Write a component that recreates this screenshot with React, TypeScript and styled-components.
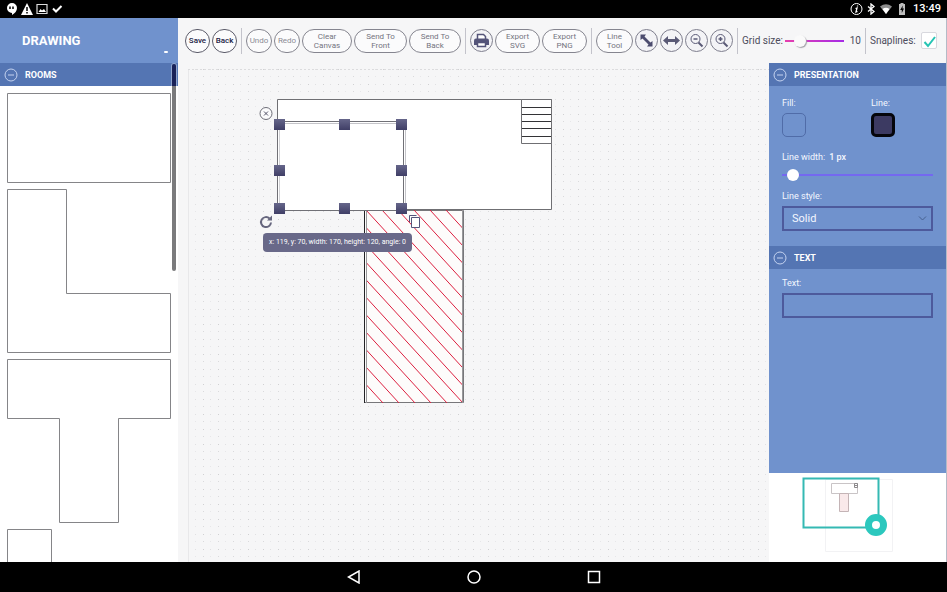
import React, { useState } from "react";
import styled, { createGlobalStyle, css } from "styled-components";

const GlobalStyle = createGlobalStyle`
  *, *::before, *::after { box-sizing: border-box; }
  html, body { margin: 0; height: 100%; overflow: hidden; }
  body { font-family: Roboto, "Liberation Sans", sans-serif; font-size: 9px; line-height: 12px; color: #4a4a68; }
  button, input, select, output { font: inherit; color: inherit; margin: 0; }
  button { cursor: pointer; }
  svg { display: block; }
`;

const Screen = styled.div`
  display: flex;
  flex-direction: column;
  height: 100vh;
  background: #f6f6f7;
`;

/* System bars */

const StatusBar = styled.header`
  display: flex;
  align-items: center;
  flex: none;
  height: 18px;
  padding: 0 6px;
  background: #000;
  color: #fff;
`;

const StatusGroup = styled.div<{ $end?: boolean }>`
  display: flex;
  align-items: center;
  gap: 3px;
  margin-left: ${(p) => (p.$end ? "auto" : 0)};
`;

const Clock = styled.time`
  margin-left: 2px;
  font-size: 11px;
  line-height: 18px;
  font-weight: 500;
`;

const NavBar = styled.nav`
  display: flex;
  justify-content: center;
  flex: none;
  height: 30px;
  background: #000;
`;

const NavButton = styled.button`
  display: grid;
  place-items: center;
  width: 120px;
  padding: 0;
  border: 0;
  background: none;
`;

/* Editor frame */

const Editor = styled.div`
  display: flex;
  flex: 1;
  min-height: 0;
  border-right: 1px solid #b4bac6;
`;

const Library = styled.aside`
  position: relative;
  display: flex;
  flex-direction: column;
  flex: none;
  width: 178px;
  background: #fff;
`;

const Brand = styled.div`
  position: relative;
  flex: none;
  height: 45px;
  padding: 0 22px;
  background: #7092cd;
`;

const Title = styled.h1`
  margin: 0;
  font-size: 13px;
  line-height: 45px;
  font-weight: 700;
  color: #fff;
`;

const BrandMark = styled.span`
  position: absolute;
  right: 10px;
  bottom: 10px;
  width: 4px;
  height: 2px;
  border-radius: 1px;
  background: #fff;
`;

const SectionHeader = styled.button`
  display: flex;
  align-items: center;
  gap: 7px;
  flex: none;
  width: 100%;
  height: 23px;
  padding: 0 4px;
  border: 0;
  background: #5475b3;
  color: #fff;
  font-size: 9px;
  font-weight: 700;
  text-align: left;
`;

const ShapeList = styled.div`
  display: flex;
  flex-direction: column;
  gap: 6px;
  flex: 1;
  min-height: 0;
  padding: 7px;
  overflow: hidden;
`;

const ShapeButton = styled.button`
  flex: none;
  padding: 0;
  border: 0;
  background: none;
`;

const ScrollThumb = styled.div`
  position: absolute;
  top: 46px;
  right: 2px;
  width: 4px;
  height: 207px;
  border-radius: 2px;
  background: linear-gradient(#1a2258 22px, #7a7a7c 22px);
  box-shadow: 0 0 0 1px rgba(255, 255, 255, 0.35);
`;

const Workspace = styled.div`
  display: flex;
  flex-direction: column;
  flex: 1;
  min-width: 0;
`;

const Stage = styled.div`
  display: flex;
  flex: 1;
  min-height: 0;
`;

/* Toolbar */

const Toolbar = styled.div`
  display: flex;
  align-items: center;
  gap: 2px;
  flex: none;
  height: 45px;
  padding: 0 7px;
  white-space: nowrap;
`;

const ToolButton = styled.button<{ $width: number; $tone?: "strong" | "muted" }>`
  flex: none;
  width: ${(p) => p.$width}px;
  height: 24px;
  padding: 0;
  border: 1px solid #85858f;
  border-radius: 12px;
  background: #fbfbfc;
  font-size: 8px;
  line-height: 9px;
  white-space: normal;
  color: #74747f;
  ${(p) => p.$tone === "strong" && css`color: #222244; border-color: #5c5c6a; font-weight: 500;`}
  ${(p) => p.$tone === "muted" && css`color: #8b8b95;`}
`;

const IconButton = styled.button`
  display: grid;
  place-items: center;
  flex: none;
  width: 23px;
  height: 23px;
  padding: 0;
  border: 1px solid #7f7f8e;
  border-radius: 50%;
  background: #f3f3f6;
`;

const Divider = styled.span`
  flex: none;
  width: 1px;
  height: 26px;
  margin: 0 2px;
  background: #c3c3cb;
`;

const ToolLabel = styled.label`
  font-size: 10px;
  line-height: 14px;
  color: #4c4c5c;
`;

const GridRange = styled.input`
  appearance: none;
  flex: none;
  width: 59px;
  height: 16px;
  background: linear-gradient(90deg, #e63fae, #a62be6) center / 100% 2px no-repeat;
  &::-webkit-slider-thumb {
    appearance: none;
    width: 12px;
    height: 12px;
    border-radius: 50%;
    background: #fafafa;
    box-shadow: 1px 1px 1px #a4a4aa;
  }
`;

const GridValue = styled.output`
  width: 15px;
  font-size: 10px;
  line-height: 14px;
  text-align: right;
  color: #4c4c5c;
`;

const SnapCheck = styled.input`
  appearance: none;
  flex: none;
  width: 16px;
  height: 17px;
  border: 1px solid #d8d8de;
  border-radius: 2px;
  background: #fff;
`;

const SnapBox = styled.span`
  position: relative;
  display: flex;
  margin-left: 3px;
  svg { position: absolute; left: 2px; top: 3px; pointer-events: none; }
`;

/* Canvas */

const Canvas = styled.main`
  position: relative;
  flex: 1;
  min-width: 0;
  overflow: hidden;
`;

const Drawing = styled.svg`
  width: 100%;
  height: 100%;
`;

const Measure = styled.div`
  position: absolute;
  left: 85px;
  top: 170px;
  padding: 0 6px;
  border-radius: 4px;
  background: #696989;
  color: #fff;
  font-size: 7px;
  line-height: 19px;
  white-space: nowrap;
`;

/* Inspector */

const Side = styled.aside`
  display: flex;
  flex-direction: column;
  flex: none;
  width: 177px;
  background: #fff;
`;

const Inspector = styled.form`
  display: flex;
  flex-direction: column;
  flex: 1;
  min-height: 0;
  background: #7092cd;
  color: #f4f7ff;
`;

const Fields = styled.div<{ $compact?: boolean }>`
  display: flex;
  flex-direction: column;
  padding: ${(p) => (p.$compact ? 5 : 8)}px 13px 15px;
`;

const SwatchRow = styled.div`
  display: grid;
  grid-template-columns: 89px 1fr;
  margin-bottom: 11px;
`;

const FieldLabel = styled.label`
  display: block;
  font-size: 9px;
  line-height: 19px;
`;

const WidthValue = styled.output`
  margin-left: 4px;
  font-weight: 500;
`;

const Swatch = styled.button<{ $filled?: boolean }>`
  display: block;
  width: 24px;
  height: 24px;
  padding: 0;
  border: ${(p) => (p.$filled ? "3px solid #05060c" : "1px solid #506ca8")};
  border-radius: 5px;
  background: ${(p) => (p.$filled ? "#3c3a62" : "transparent")};
`;

const WidthRange = styled.input`
  appearance: none;
  width: 100%;
  height: 16px;
  margin-bottom: 4px;
  background: linear-gradient(#7468f0, #7468f0) center / 100% 2px no-repeat;
  &::-webkit-slider-thumb {
    appearance: none;
    width: 12px;
    height: 12px;
    border-radius: 50%;
    background: #fff;
  }
`;

const SelectBox = styled.div`
  position: relative;
  svg { position: absolute; right: 6px; top: 9px; pointer-events: none; }
`;

const fieldFrame = css`
  display: block;
  width: 100%;
  height: 25px;
  border: 2px solid #4d5a9c;
  border-radius: 0;
  background: transparent;
`;

const StyleSelect = styled.select`
  appearance: none;
  ${fieldFrame}
  padding: 0 8px;
  font-size: 11px;
`;

const TextInput = styled.input`
  ${fieldFrame}
  padding: 0 8px;
`;

const Navigator = styled.section`
  flex: none;
  height: 89px;
`;

function MinusCircle() {
  return (
    <svg width="14" height="14" viewBox="0 0 14 14" fill="none" stroke="#c5d3f0">
      <circle cx="7" cy="7" r="6" />
      <path d="M4 7h6" />
    </svg>
  );
}

const rooms = [
  { name: "Rectangular room", height: 90, path: "M.5.5h163v89H.5z" },
  { name: "L-shaped room", height: 164, path: "M.5.5h59v104h104v59H.5z" },
  { name: "T-shaped room", height: 164, path: "M.5.5h163v59h-52v104h-59v-104H.5z" },
  { name: "Small room", height: 90, path: "M.5.5h44v44H.5z" },
];

const handles = [
  [279, 124], [344, 124], [401, 124],
  [279, 170], [401, 170],
  [279, 208], [344, 208], [401, 208],
];

function FloorPlan() {
  return (
    <Drawing role="img" aria-label="Floor plan">
      <defs>
        <pattern id="dots" width="15" height="15" patternUnits="userSpaceOnUse">
          <rect x="0" y="0" width="1" height="1" fill="#d0d0d2" />
          <rect x="7" y="0" width="1" height="1" fill="#e0e0e2" />
          <rect x="0" y="7" width="1" height="1" fill="#dadadc" />
          <rect x="7" y="7" width="1" height="1" fill="#e7e7e9" />
        </pattern>
        <linearGradient id="grip" x2="0" y2="1">
          <stop stopColor="#66668a" />
          <stop offset="1" stopColor="#3f3e66" />
        </linearGradient>
        <clipPath id="hall"><rect x="366" y="210" width="97" height="193" /></clipPath>
      </defs>
      <svg x="10" y="6" width="100%" height="100%">
        <rect width="100%" height="100%" fill="url(#dots)" />
        <path d="M.5 0v600" stroke="#e8e8ea" />
        <path d="M0 .5h1200" stroke="#dcdcde" strokeDasharray="2 2" />
      </svg>
      <g transform="translate(-178 -63)" fill="none">
        <path d="M277.500 99.500h274v110h-274z" fill="#fff" stroke="#6f6f73" />
        <path d="M521.500 99.500h30v44h-30z" fill="#fff" stroke="#6f6f73" />
        <path d="M522 107.500h29M522 114.500h29M522 121.500h29M522 128.500h29M522 136.500h29" stroke="#333336" />
        <path d="M364.500 210.500h99v192h-99z" fill="#fdfcfb" stroke="#77777a" />
        <g clipPath="url(#hall)" stroke="#dc2040">
          {Array.from({ length: 19 }, (_, i) => 366 + (i - 12) * 16).map((x) => (
            <path key={x} d={`M${x} 210l177 193`} />
          ))}
        </g>
        <path d="M364.500 210v193" stroke="#222225" />
        <path d="M366.500 210v193M462.500 210v193" stroke="#98989b" />
        <path d="M277.500 121.500h126v89h-126z" fill="#fff" stroke="#707076" />
        <path d="M279.500 123.500v86" stroke="#d2d2d6" />
        <path d="M280 123.500h121M405.500 122v88" stroke="#c4c4c9" />
        {handles.map(([x, y]) => (
          <rect key={`${x}-${y}`} x={x - 5} y={y - 5} width="11" height="11" fill="url(#grip)" />
        ))}
        <circle cx="266" cy="113.500" r="6" fill="#fbfbfc" stroke="#6e6e78" />
        <path d="M264 111.500l4 4m0-4l-4 4" stroke="#55556a" />
        <path d="M269.500 218.500a5 5 0 1 0 1.500 4" stroke="#66667e" strokeWidth="2" />
        <path d="M267 220.500h5v-5z" fill="#66667e" />
        <path d="M409.500 222v-6.500h7" stroke="#55557c" />
        <path d="M411.500 217.500h8v10h-8z" fill="#fff" stroke="#55557c" />
      </g>
    </Drawing>
  );
}

export default function App() {
  const [gridSize, setGridSize] = useState(10);
  const [lineWidth, setLineWidth] = useState(1);

  return (
    <Screen>
      <GlobalStyle />
      <StatusBar>
        <StatusGroup>
          <svg width="12" height="12" viewBox="0 0 12 12">
            <path d="M6 0a5 5 0 0 1 5 5c0 3-2 5-5 7v-2a5 5 0 0 1 0-10z" fill="#fff" />
            <path d="M4 3.500v2.500M7 3.500v2.500" stroke="#000" strokeWidth="1.500" />
          </svg>
          <svg width="12" height="12" viewBox="0 0 12 12">
            <path d="M6 0l6 12H0z" fill="#fff" />
            <path d="M6 4v4M6 9v1.500" stroke="#000" strokeWidth="1.500" />
          </svg>
          <svg width="12" height="12" viewBox="0 0 12 12">
            <path d="M1 1.500h10v9H1z" fill="none" stroke="#ddd" strokeWidth="1.200" />
            <path d="M2.500 9l2-3 1.500 1.500L8 6l2 3z" fill="#fff" />
          </svg>
          <svg width="12" height="12" viewBox="0 0 12 12">
            <path d="M2 5.500l3 3L10.500 3" fill="none" stroke="#fff" strokeWidth="2" />
          </svg>
        </StatusGroup>
        <StatusGroup $end>
          <svg width="13" height="14" viewBox="0 0 13 14" fill="none" stroke="#fff">
            <circle cx="6.500" cy="7" r="5.500" />
            <path d="M7.500 3.500v1M5.500 6.500l1.500-.5-1 4 1.500-.5" strokeWidth="1.300" />
          </svg>
          <svg width="10" height="12" viewBox="0 0 10 12" fill="none" stroke="#fff" strokeWidth="1.300">
            <path d="M2 3.500l6 5L5 11V1l3 2.500-6 5" />
          </svg>
          <svg width="14" height="12" viewBox="0 0 14 12">
            <path d="M1 3.500Q7-1 13 3.500L7 11z" fill="#8d8d8d" />
            <path d="M3.500 6Q7 3.500 10.500 6L7 11z" fill="#fff" />
          </svg>
          <svg width="12" height="12" viewBox="0 0 12 12">
            <path d="M4.500 0h3v1H9v11H3V1h1.500z" fill="#bdbdbd" />
            <path d="M6.800 2.500L4.200 7h1.600v3L8 5.500H6.500z" fill="#000" />
          </svg>
          <Clock>13:49</Clock>
        </StatusGroup>
      </StatusBar>

      <Editor>
        <Library>
          <Brand>
            <Title>DRAWING</Title>
            <BrandMark />
          </Brand>
          <SectionHeader type="button"><MinusCircle />ROOMS</SectionHeader>
          <ShapeList>
            {rooms.map((room) => (
              <ShapeButton key={room.name} type="button" aria-label={room.name}>
                <svg width="164" height={room.height} fill="none" stroke="#858588">
                  <path d={room.path} />
                </svg>
              </ShapeButton>
            ))}
          </ShapeList>
          <ScrollThumb />
        </Library>

        <Workspace>
          <Toolbar role="toolbar">
            <ToolButton $width={25} $tone="strong">Save</ToolButton>
            <ToolButton $width={25} $tone="strong">Back</ToolButton>
            <Divider />
            <ToolButton $width={26} $tone="muted">Undo</ToolButton>
            <ToolButton $width={26} $tone="muted">Redo</ToolButton>
            <ToolButton $width={50}>Clear<br />Canvas</ToolButton>
            <ToolButton $width={53}>Send To<br />Front</ToolButton>
            <ToolButton $width={52}>Send To<br />Back</ToolButton>
            <Divider />
            <IconButton aria-label="Print">
              <svg width="17" height="17" viewBox="0 0 17 17">
                <path d="M4.500 7V2.500h6l2 2V7" fill="#fff" stroke="#55557a" strokeWidth="1.500" />
                <path d="M1 8.500Q1 6.500 3 6.500h11q2 0 2 2V13H1z" fill="#55557a" />
                <path d="M4.500 10.500h8v4h-8z" fill="#fff" stroke="#55557a" strokeWidth="1.500" />
              </svg>
            </IconButton>
            <ToolButton $width={45}>Export<br />SVG</ToolButton>
            <ToolButton $width={45}>Export<br />PNG</ToolButton>
            <Divider />
            <ToolButton $width={37}>Line<br />Tool</ToolButton>
            <IconButton aria-label="Fit to screen">
              <svg width="15" height="15" viewBox="0 0 15 15" fill="#4c4c6e">
                <path d="M1.500 1.500h5.500L5.500 3.500 11.500 9.500l2-1.500v5.500H8l1.500-2L3.500 5.500l-2 1.500z" />
              </svg>
            </IconButton>
            <IconButton aria-label="Fit to width">
              <svg width="17" height="13" viewBox="0 0 17 13" fill="#5a5a76">
                <path d="M0 6.500L5 2v3h7V2l5 4.500-5 4.500V8H5v3z" />
              </svg>
            </IconButton>
            <IconButton aria-label="Zoom out">
              <svg width="15" height="15" viewBox="0 0 15 15" fill="none" stroke="#5a5a76">
                <circle cx="6.500" cy="6" r="4.500" />
                <path d="M4.500 6h4" strokeWidth="1.500" />
                <path d="M9.500 9.500l4 4" strokeWidth="2" />
              </svg>
            </IconButton>
            <IconButton aria-label="Zoom in">
              <svg width="15" height="15" viewBox="0 0 15 15" fill="none" stroke="#5a5a76">
                <circle cx="6.500" cy="6" r="4.500" />
                <path d="M4.500 6h4M6.500 4v4" strokeWidth="1.500" />
                <path d="M9.500 9.500l4 4" strokeWidth="2" />
              </svg>
            </IconButton>
            <Divider />
            <ToolLabel htmlFor="grid-size">Grid size:</ToolLabel>
            <GridRange
              id="grid-size"
              type="range"
              min={1}
              max={50}
              value={gridSize}
              onChange={(e) => setGridSize(Number(e.target.value))}
            />
            <GridValue htmlFor="grid-size">{gridSize}</GridValue>
            <Divider />
            <ToolLabel htmlFor="snaplines">Snaplines:</ToolLabel>
            <SnapBox>
              <SnapCheck id="snaplines" type="checkbox" defaultChecked />
              <svg width="14" height="13" viewBox="0 0 14 13" fill="none" stroke="#25c4b4" strokeWidth="2">
                <path d="M1.500 7l3.500 4L12 2" />
              </svg>
            </SnapBox>
          </Toolbar>

          <Stage>
            <Canvas>
              <FloorPlan />
              <Measure>x: 119, y: 70, width: 170, height: 120, angle: 0</Measure>
            </Canvas>

            <Side>
              <Inspector onSubmit={(e) => e.preventDefault()}>
                <SectionHeader type="button"><MinusCircle />PRESENTATION</SectionHeader>
                <Fields>
                  <SwatchRow>
                    <div>
                      <FieldLabel htmlFor="fill">Fill:</FieldLabel>
                      <Swatch id="fill" type="button" />
                    </div>
                    <div>
                      <FieldLabel htmlFor="line">Line:</FieldLabel>
                      <Swatch id="line" type="button" $filled />
                    </div>
                  </SwatchRow>
                  <FieldLabel htmlFor="line-width">
                    Line width:<WidthValue>{lineWidth} px</WidthValue>
                  </FieldLabel>
                  <WidthRange
                    id="line-width"
                    type="range"
                    min={0}
                    max={30}
                    value={lineWidth}
                    onChange={(e) => setLineWidth(Number(e.target.value))}
                  />
                  <FieldLabel htmlFor="line-style">Line style:</FieldLabel>
                  <SelectBox>
                    <StyleSelect id="line-style" defaultValue="Solid">
                      <option>Solid</option>
                      <option>Dashed</option>
                      <option>Dotted</option>
                    </StyleSelect>
                    <svg width="9" height="7" viewBox="0 0 9 7" fill="none" stroke="#46618f">
                      <path d="M1 1.500l3.500 3.500L8 1.500" />
                    </svg>
                  </SelectBox>
                </Fields>
                <SectionHeader type="button"><MinusCircle />TEXT</SectionHeader>
                <Fields $compact>
                  <FieldLabel htmlFor="text">Text:</FieldLabel>
                  <TextInput id="text" type="text" />
                </Fields>
              </Inspector>
              <Navigator aria-label="Navigator">
                <svg width="177" height="89" fill="none">
                  <path d="M56.500 6.500h67v72h-67z" stroke="#f2f2f4" />
                  <path d="M62.500 10.500h26v10h-26z" stroke="#c9c4c6" />
                  <path d="M85.500 10.500h3v4h-3zM86 12.500h3" stroke="#8d8a8c" />
                  <path d="M70.500 20.500h9v18h-9z" fill="#f9e9ea" stroke="#c4b4b6" />
                  <path d="M34.500 5.500h75v49h-75z" stroke="#35b9b3" strokeWidth="2" />
                  <circle cx="107" cy="52" r="7.500" fill="#fff" stroke="#2cc8be" strokeWidth="7" />
                </svg>
              </Navigator>
            </Side>
          </Stage>
        </Workspace>
      </Editor>

      <NavBar>
        <NavButton aria-label="Back">
          <svg width="14" height="14" viewBox="0 0 14 14" fill="none" stroke="#fff" strokeWidth="1.500">
            <path d="M12 1v12L1.500 7z" />
          </svg>
        </NavButton>
        <NavButton aria-label="Home">
          <svg width="14" height="14" viewBox="0 0 14 14" fill="none" stroke="#fff" strokeWidth="1.500">
            <circle cx="7" cy="7" r="6" />
          </svg>
        </NavButton>
        <NavButton aria-label="Recent apps">
          <svg width="14" height="14" viewBox="0 0 14 14" fill="none" stroke="#fff" strokeWidth="1.500">
            <path d="M1.500 1.500h11v11h-11z" />
          </svg>
        </NavButton>
      </NavBar>
    </Screen>
  );
}
